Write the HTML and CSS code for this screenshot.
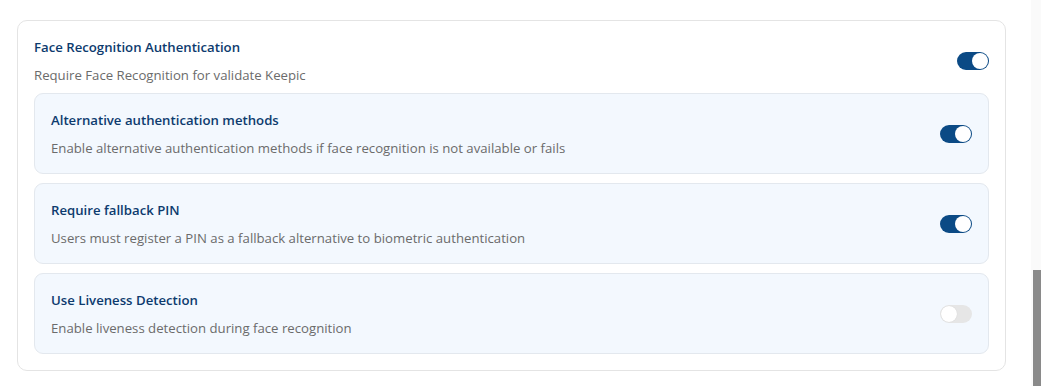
FILE: index.html
```html
<!DOCTYPE html>
<html lang="en">
<head>
  <meta charset="UTF-8" />
  <meta name="viewport" content="width=device-width, initial-scale=1" />
  <title>Face Recognition Settings</title>
  <link rel="stylesheet" href="styles.css">
</head>
<body>
  <div class="page">
    <div class="card">
      <div class="setting-head">
        <div class="setting-text">
          <h3>Face Recognition Authentication</h3>
          <p>Require Face Recognition for validate Keepic</p>
        </div>
        <label class="switch on"><span class="knob"></span></label>
      </div>

      <div class="sub-list">
        <div class="sub-item">
          <div class="setting-text">
            <h3>Alternative authentication methods</h3>
            <p>Enable alternative authentication methods if face recognition is not available or fails</p>
          </div>
          <label class="switch on"><span class="knob"></span></label>
        </div>

        <div class="sub-item">
          <div class="setting-text">
            <h3>Require fallback PIN</h3>
            <p>Users must register a PIN as a fallback alternative to biometric authentication</p>
          </div>
          <label class="switch on"><span class="knob"></span></label>
        </div>

        <div class="sub-item">
          <div class="setting-text">
            <h3>Use Liveness Detection</h3>
            <p>Enable liveness detection during face recognition</p>
          </div>
          <label class="switch off"><span class="knob"></span></label>
        </div>
      </div>
    </div>
  </div>

  <div class="scroll-track"><div class="scroll-thumb"></div></div>
</body>
</html>
```

FILE: styles.css
```css
* {
  box-sizing: border-box;
}

body {
  font-family: 'Open Sans', 'Noto Sans', sans-serif;
  background: #fff;
  color: #444;
  margin: 0;
  padding: 0;
  overflow: hidden;
}

.page {
  width: 1031px;
  padding: 20px 25px 0 17px;
}

.card {
  background: #fff;
  border: 1px solid #e4e4e4;
  border-radius: 10px;
  padding: 16px 16px 16px 16px;
}

.setting-head {
  display: flex;
  align-items: center;
  justify-content: space-between;
  margin-bottom: 8px;
}

.setting-text h3 {
  margin: 0;
  font-size: 13.2px;
  font-weight: 600;
  color: #0d3b6e;
  line-height: 20px;
}

.setting-text p {
  margin: 8px 0 0;
  font-size: 13.2px;
  color: #6b6b6b;
  line-height: 20px;
}

.sub-list {
  display: flex;
  flex-direction: column;
  gap: 9px;
}

.sub-item {
  display: flex;
  align-items: center;
  justify-content: space-between;
  background: #f3f8fe;
  border: 1px solid #e3e8ee;
  border-radius: 9px;
  padding: 16px;
  height: 81px;
}

.switch {
  position: relative;
  flex-shrink: 0;
  width: 32px;
  height: 18px;
  border-radius: 9px;
  cursor: pointer;
}

.switch .knob {
  position: absolute;
  top: 1px;
  width: 16px;
  height: 16px;
  border-radius: 50%;
  background: #fff;
}

.switch.on {
  background: #0b4a85;
}

.switch.on .knob {
  right: 1px;
}

.switch.off {
  background: #e6e6e6;
}

.switch.off .knob {
  left: 1px;
  box-shadow: 0 0 1px rgba(0, 0, 0, 0.15);
}

.scroll-track {
  position: absolute;
  top: 0;
  right: 0;
  width: 10px;
  height: 386px;
  background: #fafafa;
}

.scroll-thumb {
  position: absolute;
  top: 270px;
  left: 2px;
  width: 8px;
  height: 116px;
  background: #8a8a8a;
}
```
